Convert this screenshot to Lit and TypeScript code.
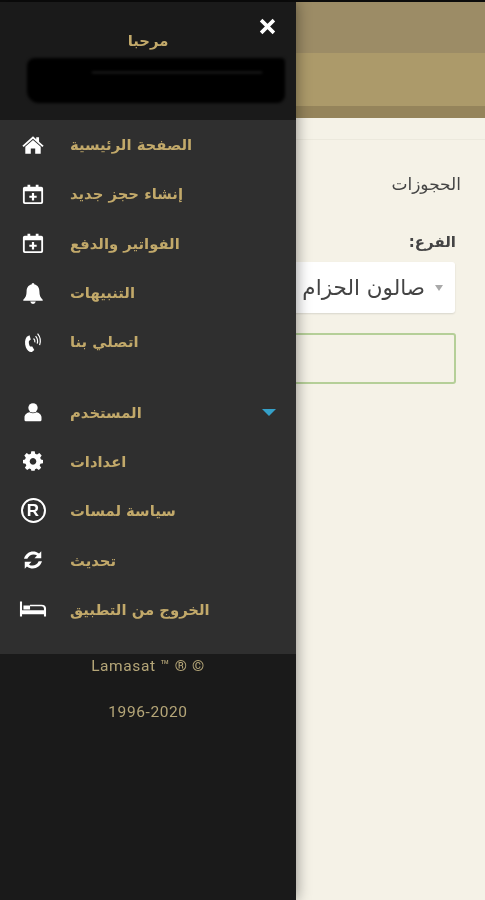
import { LitElement, html, css, svg } from 'lit';
import { customElement } from 'lit/decorators.js';

const ICONS = {
  home: svg`<path fill="currentColor" d="M12 2.5 L15.5 5.6 V3.6 H18.6 V8.4 L23.6 12.8 L22.2 14.3 L12 5.3 L1.8 14.3 L0.4 12.8 Z"/><path fill="currentColor" d="M12 6.6 L20.4 14 V21.6 H14.4 V15.8 H9.6 V21.6 H3.6 V14 Z"/>`,
  calendar: svg`<path fill="currentColor" fill-rule="evenodd" d="M3 4 H6 V2 H9 V4 H15 V2 H18 V4 H21 Q23 4 23 6 V21 Q23 23 21 23 H3 Q1 23 1 21 V6 Q1 4 3 4 Z M3 9 V20.5 Q3 21 3.5 21 H20.5 Q21 21 21 20.5 V9 Z"/><path fill="currentColor" d="M10.8 11 H13.2 V13.8 H16 V16.2 H13.2 V19 H10.8 V16.2 H8 V13.8 H10.8 Z"/>`,
  bell: svg`<path fill="currentColor" d="M12 1 Q13.6 1 13.6 2.8 C17.4 3.6 19 6.6 19 10.4 C19 14.6 20 17 22.6 19.4 V20.4 H1.4 V19.4 C4 17 5 14.6 5 10.4 C5 6.6 6.6 3.6 10.4 2.8 Q10.4 1 12 1 Z"/><path fill="currentColor" d="M9 21.4 H15 Q14.6 24 12 24 Q9.4 24 9 21.4 Z"/>`,
  phone: svg`<path fill="currentColor" d="M8.2 4.6 L9.6 9.2 L7.6 10.8 C7.2 12.6 7.6 15 8.8 17 L11.2 17 L13.4 20.6 L10.8 22.8 C8.4 23.4 5.6 21.4 4.2 17.6 C2.8 13.6 3 9 5.2 6.2 Z"/><path fill="none" stroke="currentColor" stroke-width="1.3" d="M12.6 8.2 Q14.6 10 14 12.4 M14.8 5.6 Q18 9 16.6 13.8 M17 2.8 Q21.6 8.4 19.2 15.4"/>`,
  user: svg`<circle fill="currentColor" cx="12" cy="7" r="5.6"/><path fill="currentColor" d="M3 23 Q1.8 23 1.8 21.6 V18.4 C1.8 14.8 5 12.8 7.8 12.2 Q12 14.6 16.2 12.2 C19 12.8 22.2 14.8 22.2 18.4 V21.6 Q22.2 23 21 23 Z"/>`,
  cog: svg`<path fill="currentColor" fill-rule="evenodd" d="M10 1 H14 L14.6 4.2 L16.9 5.1 L19.6 3.3 L22.4 6.1 L20.6 8.8 L21.6 11 L24 11.6 V15.4 L20.9 16 L20 18.2 L21.8 20.9 L19 23.7 L16.4 21.9 L14.4 22.8 L14 24.6 H10 L9.6 22.8 L7.6 21.9 L5 23.7 L2.2 20.9 L4 18.2 L3.1 16 L0 15.4 V11.6 L2.4 11 L3.4 8.8 L1.6 6.1 L4.4 3.3 L7.1 5.1 L9.4 4.2 Z M12 9.2 A4 4 0 1 0 12.01 9.2 Z" transform="translate(0 -0.8)"/>`,
  refresh: svg`<path fill="currentColor" d="M21 2.5 V10 H13.6 L16.4 7.2 C13.4 4.8 8 5.6 5.8 10.6 H2.2 C4.2 3.2 12.6 0.4 18.6 5 Z"/><path fill="currentColor" d="M3 21.5 V14 H10.4 L7.6 16.8 C10.6 19.2 16 18.4 18.2 13.4 H21.8 C19.8 20.8 11.4 23.6 5.4 19 Z"/>`,
  bed: svg`<path fill="currentColor" d="M0 3 H2.4 V13 H27.6 V11 Q27.6 8.4 24.6 8.4 H11.6 V12 H4 V7.4 H11.6 V6.6 H24.8 Q30 6.6 30 11 V20 H27.6 V17.4 H2.4 V20 H0 Z"/>`,
};

const ICON_SIZES: Record<string, number> = { cog: 20, user: 20, home: 22, refresh: 22 };

const TOP_ITEMS = [
  { icon: 'home', label: 'الصفحة الرئيسية' },
  { icon: 'calendar', label: 'إنشاء حجز جديد' },
  { icon: 'calendar', label: 'الفواتير والدفع' },
  { icon: 'bell', label: 'التنبيهات' },
  { icon: 'phone', label: 'اتصلي بنا' },
];

const USER_ITEMS = [
  { icon: 'cog', label: 'اعدادات' },
  { icon: 'registered', label: 'سياسة لمسات' },
  { icon: 'refresh', label: 'تحديث' },
  { icon: 'bed', label: 'الخروج من التطبيق' },
];

@customElement('app-root')
export class AppRoot extends LitElement {
  static styles = css`
    :host {
      display: block;
      width: 485px;
      height: 900px;
      overflow: hidden;
      background: #f5f2e7;
      font-family: 'DejaVu Sans', sans-serif;
    }

    .screen {
      display: flex;
      height: 900px;
      border-top: 2px solid #0c0c0c;
      box-sizing: border-box;
      filter: blur(0.4px);
    }

    /* drawer */
    .drawer {
      flex: 0 0 296px;
      display: flex;
      flex-direction: column;
      background: #1a1a1a;
      box-shadow: 0 0 14px rgba(0, 0, 0, 0.45);
      z-index: 1;
      color: #c2a96a;
    }

    .drawer-head {
      height: 118px;
      box-sizing: border-box;
    }

    .close-row {
      height: 30px;
      padding: 16px 20px 0 0;
      box-sizing: border-box;
      display: flex;
      justify-content: flex-end;
    }

    .close {
      width: 17px;
      height: 17px;
      color: #fff;
    }

    .hello {
      height: 18px;
      line-height: 18px;
      text-align: center;
      font-size: 14.8px;
      font-weight: bold;
    }

    .blob {
      position: relative;
      margin: 8px 11px 0 27px;
      height: 45px;
      background: #000;
      border-radius: 8px 4px 8px 12px;
      filter: blur(1.5px);
    }

    .blob-line {
      position: absolute;
      left: 65px;
      top: 14px;
      width: 170px;
      height: 1px;
      background: #3a3a3a;
    }

    .menu {
      height: 534px;
      background: #2f2f2f;
      box-sizing: border-box;
    }

    .group + .group {
      margin-top: 21px;
    }

    .row {
      height: 49.3px;
      display: flex;
      align-items: center;
    }

    .icon-cell {
      flex: 0 0 70px;
      padding-right: 4px;
      box-sizing: border-box;
      display: flex;
      justify-content: center;
      color: #fff;
    }

    .icon-cell svg {
      display: block;
    }

    .registered {
      width: 25px;
      height: 25px;
      border: 2px solid #fff;
      border-radius: 50%;
      box-sizing: border-box;
      display: flex;
      align-items: center;
      justify-content: center;
      font-family: 'Liberation Sans', sans-serif;
      font-size: 17px;
      font-weight: bold;
      line-height: 1;
    }

    .label {
      flex: 1;
      font-size: 14.8px;
      font-weight: bold;
      white-space: nowrap;
      text-align: left;
      unicode-bidi: plaintext;
    }

    .caret {
      width: 0;
      height: 0;
      margin-right: 20px;
      border-left: 7px solid transparent;
      border-right: 7px solid transparent;
      border-top: 7px solid #35a0c8;
    }

    .drawer-foot {
      flex: 1;
      text-align: center;
      font-family: 'Roboto', sans-serif;
      font-size: 15.5px;
      letter-spacing: 0.6px;
      color: #b5a678;
    }

    .copy {
      margin-top: 3px;
      line-height: 18px;
    }

    .years {
      margin-top: 28px;
      line-height: 18px;
    }

    /* page behind the drawer */
    .page {
      flex: 1;
      min-width: 0;
      overflow: hidden;
      direction: rtl;
    }

    .bar-top {
      height: 51px;
      background: #9c8c66;
    }

    .bar-mid {
      height: 53px;
      background: #ac9a6a;
    }

    .bar-low {
      height: 12px;
      background: #95845b;
    }

    .content {
      padding-top: 21px;
      color: #444;
    }

    .rule {
      height: 1px;
      background: #ece9dd;
    }

    .title {
      margin: 35px 24px 0 0;
      height: 18px;
      line-height: 18px;
      font-size: 17px;
      white-space: nowrap;
    }

    .field-label {
      margin: 39px 29px 0 0;
      height: 20px;
      line-height: 20px;
      font-size: 15px;
      font-weight: bold;
      white-space: nowrap;
    }

    .select {
      display: flex;
      align-items: center;
      gap: 10px;
      margin: 10px 30px 0 0;
      width: 300px;
      height: 51px;
      padding-right: 12px;
      box-sizing: border-box;
      background: #fff;
      border-radius: 3px;
      box-shadow: 0 1px 2px rgba(0, 0, 0, 0.12);
      font-size: 21.5px;
      white-space: nowrap;
    }

    .select-arrow {
      flex: none;
      width: 0;
      height: 0;
      border-left: 4px solid transparent;
      border-right: 4px solid transparent;
      border-top: 6px solid #a9a9a9;
    }

    .input {
      margin: 20px 29px 0 0;
      width: 300px;
      height: 51px;
      box-sizing: border-box;
      border: 2px solid #b5cf98;
      border-radius: 3px;
    }
  `;

  private _icon(name: string) {
    if (name === 'registered') {
      return html`<div class="registered">R</div>`;
    }
    if (name === 'bed') {
      return html`<svg width="28" height="20" viewBox="0 0 30 23">${ICONS.bed}</svg>`;
    }
    const size = ICON_SIZES[name] ?? 22;
    return html`<svg width=${size} height=${size} viewBox="0 0 24 24">
      ${ICONS[name as keyof typeof ICONS]}
    </svg>`;
  }

  private _row(item: { icon: string; label: string }) {
    return html`
      <div class="row">
        <div class="icon-cell">${this._icon(item.icon)}</div>
        <div class="label" dir="rtl">${item.label}</div>
      </div>
    `;
  }

  render() {
    return html`
      <div class="screen">
        <aside class="drawer">
          <div class="drawer-head">
            <div class="close-row">
              <svg class="close" viewBox="0 0 16 16">
                <path fill="none" stroke="currentColor" stroke-width="3.4" d="M2 2 L14 14 M14 2 L2 14" />
              </svg>
            </div>
            <div class="hello" dir="rtl">مرحبا</div>
            <div class="blob"><div class="blob-line"></div></div>
          </div>
          <nav class="menu">
            <div class="group">${TOP_ITEMS.map((item) => this._row(item))}</div>
            <div class="group">
              <div class="row">
                <div class="icon-cell">${this._icon('user')}</div>
                <div class="label" dir="rtl">المستخدم</div>
                <div class="caret"></div>
              </div>
              ${USER_ITEMS.map((item) => this._row(item))}
            </div>
          </nav>
          <div class="drawer-foot">
            <div class="copy">Lamasat ™ ® ©</div>
            <div class="years">1996-2020</div>
          </div>
        </aside>
        <main class="page">
          <div class="bar-top"></div>
          <div class="bar-mid"></div>
          <div class="bar-low"></div>
          <div class="content">
            <div class="rule"></div>
            <div class="title">الحجوزات</div>
            <div class="field-label">الفرع:</div>
            <div class="select">
              <span class="select-arrow"></span>
              <span>صالون الحزام</span>
            </div>
            <div class="input"></div>
          </div>
        </main>
      </div>
    `;
  }
}
